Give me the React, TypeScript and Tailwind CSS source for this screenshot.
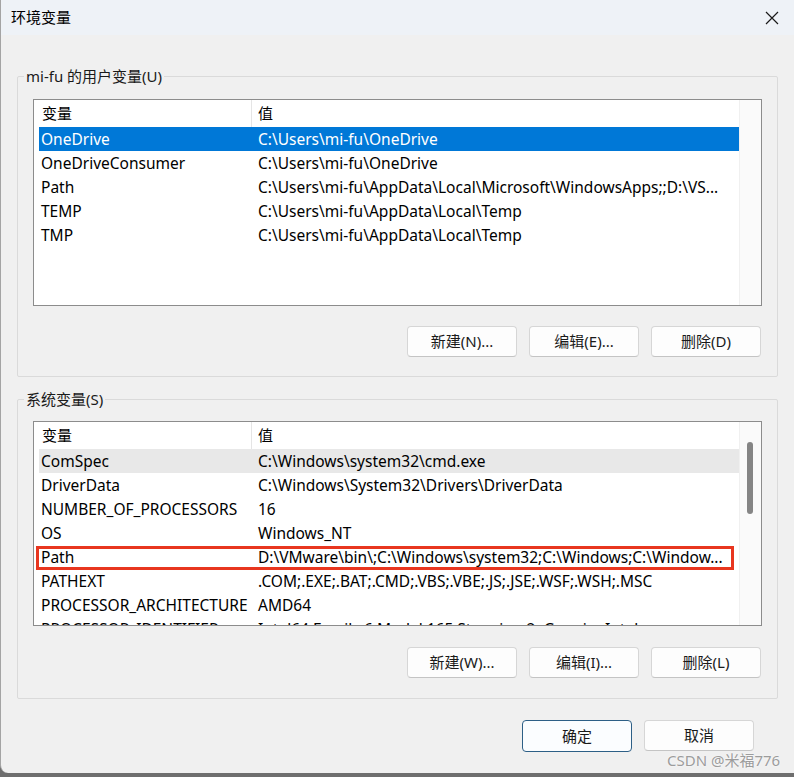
import React from "react";

const FONT = { fontFamily: '"Noto Sans", "Noto Sans CJK SC", sans-serif' };

type Row = { name: string; value: string; selected?: boolean; hover?: boolean; marked?: boolean };

const userRows: Row[] = [
  { name: "OneDrive", value: "C:\\Users\\mi-fu\\OneDrive", selected: true },
  { name: "OneDriveConsumer", value: "C:\\Users\\mi-fu\\OneDrive" },
  { name: "Path", value: "C:\\Users\\mi-fu\\AppData\\Local\\Microsoft\\WindowsApps;;D:\\VS..." },
  { name: "TEMP", value: "C:\\Users\\mi-fu\\AppData\\Local\\Temp" },
  { name: "TMP", value: "C:\\Users\\mi-fu\\AppData\\Local\\Temp" },
];

const sysRows: Row[] = [
  { name: "ComSpec", value: "C:\\Windows\\system32\\cmd.exe", hover: true },
  { name: "DriverData", value: "C:\\Windows\\System32\\Drivers\\DriverData" },
  { name: "NUMBER_OF_PROCESSORS", value: "16" },
  { name: "OS", value: "Windows_NT" },
  { name: "Path", value: "D:\\VMware\\bin\\;C:\\Windows\\system32;C:\\Windows;C:\\Window...", marked: true },
  { name: "PATHEXT", value: ".COM;.EXE;.BAT;.CMD;.VBS;.VBE;.JS;.JSE;.WSF;.WSH;.MSC" },
  { name: "PROCESSOR_ARCHITECTURE", value: "AMD64" },
  { name: "PROCESSOR_IDENTIFIER", value: "Intel64 Family 6 Model 165 Stepping 2, GenuineIntel" },
];

function ListView({ rows, height, scrollbar }: { rows: Row[]; height: number; scrollbar?: boolean }) {
  return (
    <div
      className="flex border border-[#8c8c8c] bg-white overflow-hidden"
      style={{ height }}
    >
      <div className="flex-1 flex flex-col pl-[5px] overflow-hidden">
        <div className="flex h-[27px] shrink-0 items-center text-[15px] text-black">
          <div className="w-[212px] pl-[3px] shrink-0 h-full flex items-center">变量</div>
          <div className="w-px h-full bg-[#e5e5e5] shrink-0" />
          <div className="pl-[6px]">值</div>
        </div>
        {rows.map((r, i) => (
          <div
            key={i}
            className={
              "relative flex h-[24px] shrink-0 items-center pt-[1px] text-[15.5px] whitespace-nowrap " +
              (r.selected ? "bg-[#0078d7] text-white" : r.hover ? "bg-[#e8e8e8] text-black" : "text-black")
            }
          >
            <div className="w-[219px] pl-[2px] shrink-0">{r.name}</div>
            <div className="">{r.value}</div>
            {r.marked && (
              <div className="absolute left-[-3px] top-[1px] w-[698px] h-[24px] border-[3px] border-[#e8361f]" />
            )}
          </div>
        ))}
      </div>
      <div className="w-[22px] shrink-0 bg-[#fafafa] border-l border-[#f0f0f0] relative">
        {scrollbar && (
          <div className="absolute left-[7px] top-[20px] w-[6px] h-[72px] rounded-full bg-[#858585]" />
        )}
      </div>
    </div>
  );
}

function Btn({ children, primary }: { children: React.ReactNode; primary?: boolean }) {
  return (
    <div
      className={
        "w-[110px] flex items-center justify-center rounded-[4px] text-[15px] text-[#1a1a1a] " +
        (primary
          ? "h-[32px] bg-[#fbfdff] border border-[#2d5f86]"
          : "h-[31px] bg-[#fdfdfd] border border-[#d6d6d6] border-b-[#c4c4c4]")
      }
    >
      {children}
    </div>
  );
}

function Group({
  label,
  children,
}: {
  label: string;
  children: React.ReactNode;
}) {
  return (
    <div className="relative border border-[#dadada] rounded-[2px]">
      <div className="absolute left-[6px] top-[-11px] px-[2px] bg-[#f0f0f0] text-[15px] leading-[20px] text-[#1a1a1a]">
        {label}
      </div>
      {children}
    </div>
  );
}

export default function App() {
  return (
    <div className="w-[794px] h-[777px] bg-[#6e6e6e] flex flex-col overflow-hidden" style={FONT}>
      <div className="relative w-[794px] h-[773px] bg-[#f0f0f0] border-l border-[#a4a4a4] rounded-bl-[8px] flex flex-col">
        <div className="h-[35px] bg-[#eef2f7] flex items-center justify-between pl-[10px] pr-[15px] shrink-0">
          <span className="text-[15px] text-black">环境变量</span>
          <svg width="14" height="14" viewBox="0 0 14 14">
            <path d="M1 1 L13 13 M13 1 L1 13" stroke="#1a1a1a" strokeWidth="1.2" />
          </svg>
        </div>
        <div className="flex flex-col pl-[16px] pr-[16px] pt-[41px]">
          <Group label="mi-fu 的用户变量(U)">
            <div className="flex flex-col px-[15px] pt-[22px] pb-[19px]">
              <ListView rows={userRows} height={207} />
              <div className="flex justify-end gap-[12px] mt-[20px] pr-[1px]">
                <Btn>新建(N)...</Btn>
                <Btn>编辑(E)...</Btn>
                <Btn>删除(D)</Btn>
              </div>
            </div>
          </Group>
          <div className="h-[22px]" />
          <Group label="系统变量(S)">
            <div className="flex flex-col px-[15px] pt-[21px] pb-[20px]">
              <ListView rows={sysRows} height={205} scrollbar />
              <div className="flex justify-end gap-[12px] mt-[21px] pr-[1px]">
                <Btn>新建(W)...</Btn>
                <Btn>编辑(I)...</Btn>
                <Btn>删除(L)</Btn>
              </div>
            </div>
          </Group>
          <div className="flex justify-end gap-[12px] mt-[21px] pr-[24px]">
            <Btn primary>确定</Btn>
            <Btn>取消</Btn>
          </div>
        </div>
        <div
          className="absolute left-[666px] top-[749px] text-[15px] text-[#9c9c9c]"
          style={{ textShadow: "0 0 2px #fff" }}
        >
          CSDN @米福776
        </div>
      </div>
    </div>
  );
}
